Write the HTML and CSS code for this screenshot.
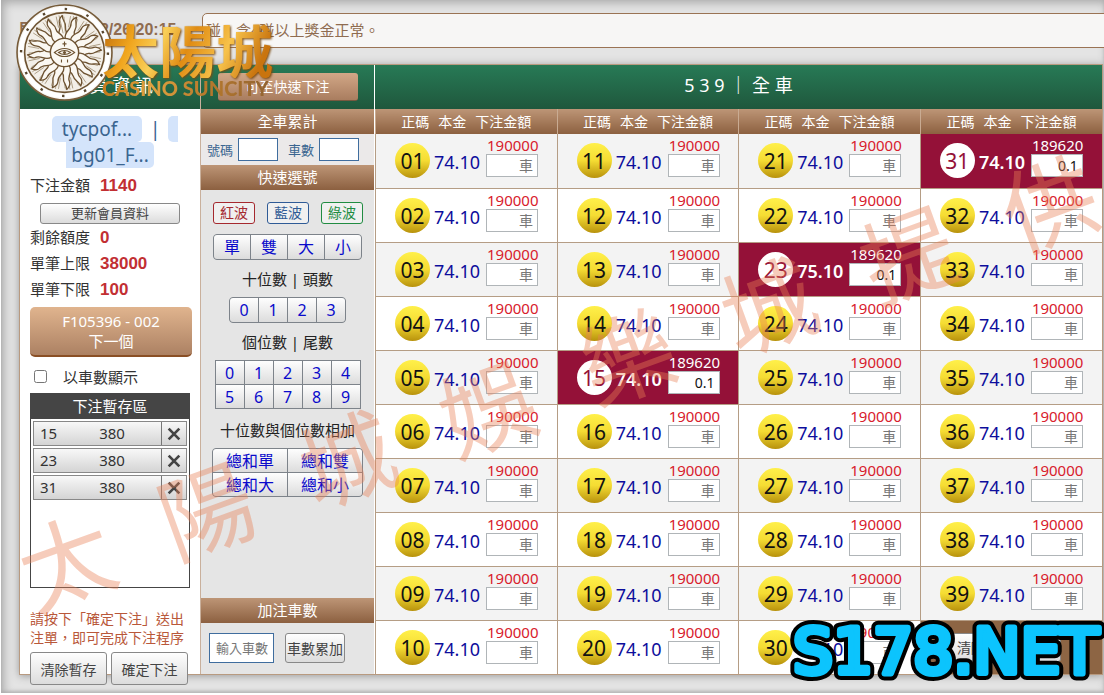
FILE: index.html
```
<!DOCTYPE html>
<html lang="zh-Hant">

<head>
    <meta charset="utf-8">
    <title>539 全車</title>
    <link rel="stylesheet" href="styles.css">
</head>

<body>
    <div class="frame">
        <div class="topbar">
            <div class="clock">即：2020/12/26 20:15</div>
            <div class="news">碰，含4碰以上獎金正常。</div>
        </div>

        <div class="panel">
            <div class="member">
                <div class="green-title">會 員 資 訊</div>
                <div class="member-body">
                    <div class="account">
                        <div class="account-line"><span class="tag">tycpof...</span><span>|</span><span class="tag-stub"></span></div>
                        <div class="account-line"><span class="tag tag-second">bg01_F...</span></div>
                    </div>
                    <div class="info">下注金額<b>1140</b></div>
                    <button class="refresh" type="button">更新會員資料</button>
                    <div class="info">剩餘額度<b>0</b></div>
                    <div class="info">單筆上限<b>38000</b></div>
                    <div class="info">單筆下限<b>100</b></div>
                    <button class="next" type="button">F105396 - 002<br>下一個</button>
                    <label class="show-cars"><input type="checkbox">以車數顯示</label>
                    <div class="temp">
                        <div class="temp-title">下注暫存區</div>
                        <ul id="temp-list"></ul>
                    </div>
                    <p class="notice">請按下「確定下注」送出<br>注單，即可完成下注程序</p>
                    <div class="actions">
                        <button type="button">清除暫存</button>
                        <button type="button">確定下注</button>
                    </div>
                </div>
            </div>

            <div class="quick">
                <div class="green-title"><button class="to-quick" type="button">可至快速下注</button></div>
                <div class="brown-title">全車累計</div>
                <div class="sum-row">
                    <label for="sum-no">號碼</label><input type="text" id="sum-no">
                    <label for="sum-car">車數</label><input type="text" id="sum-car">
                </div>
                <div class="brown-title">快速選號</div>
                <div class="waves">
                    <button class="red" type="button">紅波</button>
                    <button class="blue" type="button">藍波</button>
                    <button class="green" type="button">綠波</button>
                </div>
                <div class="keys keys-kind">
                    <button type="button">單</button><button type="button">雙</button><button type="button">大</button><button type="button">小</button>
                </div>
                <div class="quick-label">十位數 | 頭數</div>
                <div class="keys keys-head">
                    <button type="button">0</button><button type="button">1</button><button type="button">2</button><button type="button">3</button>
                </div>
                <div class="quick-label">個位數 | 尾數</div>
                <div class="keys keys-tail">
                    <button type="button">0</button><button type="button">1</button><button type="button">2</button><button type="button">3</button><button type="button">4</button>
                    <button type="button">5</button><button type="button">6</button><button type="button">7</button><button type="button">8</button><button type="button">9</button>
                </div>
                <div class="quick-label">十位數與個位數相加</div>
                <div class="keys keys-total">
                    <button type="button">總和單</button><button type="button">總和雙</button>
                    <button type="button">總和大</button><button type="button">總和小</button>
                </div>
                <div class="add-cars">
                    <div class="brown-title">加注車數</div>
                    <div class="add-row">
                        <input type="text" placeholder="輸入車數" aria-label="輸入車數">
                        <button type="button">車數累加</button>
                    </div>
                </div>
            </div>

            <div class="board">
                <div class="green-title">5 3 9 ｜ 全 車</div>
                <table>
                    <thead>
                        <tr id="board-head"></tr>
                    </thead>
                    <tbody id="board-body"></tbody>
                </table>
            </div>
        </div>
    </div>

    <div class="logo">
        <svg class="sun" viewBox="0 0 100 100">
            <defs>
                <g id="rays">
                    <path d="M45.500 37 C41 31 48 27 45 21 C44 18 46 15 48 13 C47 18 52 20 51 25 C50 30 55 31 54.500 37 Z" fill="#fbf8f2" />
                    <path d="M45.500 37 C41 31 48 27 45 21 C44 18 46 15 48 13 M48 13 C47 18 52 20 51 25 C50 30 55 31 54.500 37" fill="none" stroke="#6d5231" stroke-width="1.3" />
                    <path d="M56 32 L59 14 M58 33 L63 17 M54 25 L56 14" fill="none" stroke="#8b7655" stroke-width=".6" />
                </g>
            </defs>
            <circle cx="50" cy="50" r="47" fill="#f7f5f1" stroke="#765b39" stroke-width="1.6" />
            <circle cx="50" cy="50" r="43" fill="none" stroke="#fff" stroke-width="4" />
            <circle cx="50" cy="50" r="43" fill="none" stroke="#57452c" stroke-width="2.400" stroke-dasharray="2.400 20.100" />
            <circle cx="50" cy="50" r="39.500" fill="#f3efe8" stroke="#6d5231" stroke-width="1.6" />
            <g id="sun-rays"></g>
            <circle cx="50" cy="50" r="14" fill="#fbf8f2" stroke="#6d5231" stroke-width="1.4" />
            <path d="M40 50 Q50 42 60 50 Q50 58 40 50 Z M44 50 Q50 46 56 50 Q50 54 44 50 Z M50 39 V44 M48 41.500 H52 M47 57 V60 M53 57 V60" fill="none" stroke="#6d5231" stroke-width="1.1" />
            <circle cx="50" cy="50" r="1.5" fill="#6d5231" />
        </svg>
        <div class="logo-text">
            <div class="logo-name">太陽城</div>
            <div class="logo-sub">CASINO SUNCITY</div>
        </div>
    </div>

    <div class="watermark">
        <span>太</span><span>陽</span><span>城</span><span>娛</span><span>樂</span><span>城</span><span>提</span><span>供</span>
    </div>

    <svg class="site" viewBox="0 0 320 76">
        <text class="site-edge" x="9" y="56">S178.NET</text>
        <text class="site-face" x="9" y="56">S178.NET</text>
    </svg>

    <script>
        const picked = { 15: '74.10', 23: '75.10', 31: '74.10' };
        const head = document.getElementById('board-head');
        const body = document.getElementById('board-body');
        const tempList = document.getElementById('temp-list');

        for (let c = 0; c < 4; c++) {
            head.innerHTML += '<th><span>正碼</span><span>本金</span><span>下注金額</span></th>';
        }

        function cell(n) {
            const no = String(n).padStart(2, '0');
            const on = picked[n];
            return `<td class="${on ? 'on' : ''}"><div class="bet">
                <span class="ball">${no}</span>
                <span class="odds">${on || '74.10'}</span>
                <span class="stake"><span>${on ? 189620 : 190000}</span>
                <input type="text" placeholder="車" aria-label="${no} 車數" value="${on ? '0.1' : ''}"></span>
            </div></td>`;
        }

        for (let r = 1; r <= 10; r++) {
            let row = '';
            for (let c = 0; c < 4; c++) {
                const n = c * 10 + r;
                // 沒有 40 號，最後一格放按鈕
                row += n < 40 ? cell(n) : '<td class="submit"><div><button type="button">清除</button><button type="button">確定(+)</button></div></td>';
            }
            body.innerHTML += `<tr>${row}</tr>`;
        }

        for (const n in picked) {
            tempList.innerHTML += `<li><span>${n}</span><span class="money">380</span><button type="button" aria-label="刪除 ${n}">
                <svg viewBox="0 0 12 12"><path d="M2 2 L10 10 M10 2 L2 10" /></svg></button></li>`;
        }

        let rays = '';
        for (let i = 0; i < 16; i++) {
            rays += `<use href="#rays" transform="rotate(${i * 22.5} 50 50)" />`;
        }
        document.getElementById('sun-rays').innerHTML = rays;
    </script>
</body>

</html>
```
FILE: styles.css
```
* {
    box-sizing: border-box;
}

body {
    margin: 0;
    padding-left: 1px;
    position: relative;
    overflow: hidden;
    background-color: #fff;
    font-family: "Noto Sans", "Noto Sans CJK TC", sans-serif;
    font-size: 15px;
    color: #333;
}

button,
input {
    font-family: inherit;
    padding: 0;
    margin: 0;
}

button {
    cursor: pointer;
    color: #444;
    border: 1px solid #888;
    border-radius: 3px;
    background: linear-gradient(#fefefe, #dcdcdc);
}

.frame {
    padding: 13px 1px 18px 18px;
    background-color: #e4e4e4;
    box-shadow: inset 3px 3px 10px #aaa, inset 0 -2px 3px #bbb;
}

.topbar {
    display: flex;
    height: 35px;
    margin-right: -6px;
    margin-bottom: 16px;
    line-height: 33px;
    color: #8f6c50;
}

.clock {
    width: 183px;
    white-space: nowrap;
    overflow: hidden;
    font-family: "Liberation Sans", "Noto Sans CJK TC", sans-serif;
    font-size: 16px;
    font-weight: bold;
}

.news {
    flex: 1;
    padding-left: 3px;
    border: 1px solid #9a7354;
    border-radius: 5px;
    background-color: #f7f6f5;
}

.panel {
    display: flex;
    min-height: 611px;
    border: 1px solid #b89a80;
    box-shadow: 0 1px 8px #999;
}

.green-title {
    height: 44px;
    line-height: 40px;
    text-align: center;
    font-size: 18px;
    color: #fff;
    background: linear-gradient(#277a56, #1f573c);
}

.brown-title {
    height: 25px;
    line-height: 24px;
    text-align: center;
    color: #fff;
    background: linear-gradient(#bd9576, #8c6040);
}

/* 會員資訊 */
.member {
    width: 181px;
    background-color: #fff;
    border-right: 1px solid #c9b09c;
}

.member-body {
    padding: 7px 9px 0 10px;
}

.account {
    font-size: 19px;
    line-height: 26px;
    color: #3a6590;
    margin-bottom: 4px;
}

.account-line {
    display: flex;
    gap: 8px;
    height: 26px;
    padding-left: 22px;
}

.account-line + .account-line {
    padding-left: 36px;
}

.tag {
    width: 90px;
    text-align: center;
    border-radius: 5px;
    background-color: #d4e4fb;
}

.tag-second {
    width: 88px;
    border-radius: 0 5px 5px 0;
}

.tag-stub {
    width: 10px;
    border-radius: 5px 0 0 5px;
    background-color: #d4e4fb;
}

.info {
    height: 26px;
    line-height: 26px;
}

.info b {
    margin-left: 10px;
    font-family: "Liberation Sans", Arial, sans-serif;
    font-size: 17px;
    color: #c22f33;
}

.refresh {
    display: block;
    width: 140px;
    height: 21px;
    margin: 5px 0 0 10px;
    font-size: 13px;
    line-height: 19px;
}

.next {
    display: block;
    width: 162px;
    height: 50px;
    margin: 5px 0 10px;
    font-size: 15px;
    line-height: 20px;
    color: #fff;
    border: 0;
    border-bottom: 2px solid #8a4f25;
    border-radius: 5px;
    background: linear-gradient(#e0b48e, #ac8163);
}

.show-cars {
    display: flex;
    align-items: center;
    gap: 16px;
    height: 18px;
    padding-left: 4px;
}

.show-cars input {
    width: 13px;
    height: 13px;
    margin: 0;
}

.temp {
    width: 160px;
    height: 195px;
    margin-top: 8px;
    border: 1px solid #454545;
}

.temp-title {
    height: 25px;
    line-height: 24px;
    text-align: center;
    color: #fff;
    background-color: #454545;
}

.temp ul {
    display: flex;
    flex-direction: column;
    gap: 2px;
    margin: 0;
    padding: 2px;
    list-style: none;
}

.temp li {
    display: flex;
    height: 25px;
    line-height: 23px;
    padding-left: 6px;
    border: 1px solid #888;
    background: linear-gradient(#f8f8f8, #d4d4d4);
}

.temp .money {
    flex: 1;
    padding-left: 42px;
}

.temp li button {
    width: 25px;
    border: 0;
    border-left: 1px solid #777;
    border-radius: 0;
    background: none;
}

.temp svg {
    display: block;
    width: 16px;
    height: 16px;
    margin: 0 auto;
}

.temp path {
    stroke: #444;
    stroke-width: 2;
}

.notice {
    margin: 21px 0 5px;
    font-size: 14px;
    line-height: 19px;
    color: #b9583a;
    white-space: nowrap;
}

.actions {
    display: flex;
    gap: 4px;
    margin-bottom: -12px;
}

.actions button {
    width: 77px;
    height: 33px;
    font-size: 14px;
}

/* 快速選號 */
.quick {
    display: flex;
    flex-direction: column;
    width: 174px;
    background-color: #e5e5e5;
    border-right: 1px solid #fff;
}

.to-quick {
    width: 140px;
    height: 28px;
    font-size: 14px;
    color: #fff;
    border: 0;
    border-bottom: 1px solid #79583f;
    background: linear-gradient(#d2a787, #a97d5f);
}

.sum-row {
    display: flex;
    align-items: center;
    gap: 5px;
    height: 31px;
    padding-left: 6px;
    font-size: 13px;
    color: #3a6590;
    background-color: #ebe9e9;
}

.sum-row input {
    width: 40px;
    height: 23px;
    border: 1px solid #3f6d9e;
}

.sum-row label + input + label {
    margin-left: 5px;
}

.waves {
    display: flex;
    gap: 12px;
    margin: 12px 0 10px 12px;
}

.waves button {
    width: 42px;
    height: 22px;
    font-size: 14px;
    line-height: 18px;
    background: #f0f0f0;
}

.waves .red {
    color: #a5292f;
    border-color: #a5292f;
}

.waves .blue {
    color: #2f5b96;
    border-color: #2f5b96;
}

.waves .green {
    color: #218c42;
    border-color: #218c42;
}

.keys {
    display: grid;
    gap: 1px;
    align-self: center;
    overflow: hidden;
    border: 1px solid #7d838a;
    border-radius: 4px;
    background-color: #7d838a;
}

.keys button {
    height: 24px;
    font-size: 16px;
    line-height: 22px;
    color: #0a0acb;
    border: 0;
    border-radius: 0;
}

.keys-kind {
    grid-template-columns: repeat(4, 36px);
}

.keys-head {
    grid-template-columns: repeat(4, 28px);
}

.keys-tail {
    grid-template-columns: repeat(5, 28px);
    border-radius: 0;
}

.keys-total {
    grid-template-columns: repeat(2, 74px);
}

.keys-tail button,
.keys-total button {
    height: 23px;
}

.quick-label {
    height: 37px;
    line-height: 38px;
    text-align: center;
    font-size: 15px;
    color: #222;
}

.keys-tail + .quick-label {
    height: 39px;
    line-height: 43px;
}

.add-cars {
    margin-top: auto;
}

.add-row {
    display: flex;
    gap: 11px;
    height: 51px;
    padding: 10px 8px;
}

.add-row input {
    width: 65px;
    height: 30px;
    padding-left: 6px;
    font-size: 13px;
    border: 1px solid #3f6d9e;
}

.add-row button {
    width: 60px;
    height: 30px;
    font-size: 14px;
    white-space: nowrap;
}

/* 號碼表 */
.board {
    flex: 1;
    background-color: #fff;
}

.board table {
    width: 100%;
    table-layout: fixed;
    border-collapse: collapse;
}

.board th {
    height: 25px;
    padding: 0;
    font-size: 14px;
    font-weight: normal;
    line-height: 24px;
    color: #fff;
    border-left: 1px solid #c9ab92;
    background: linear-gradient(#bd9576, #8c6040);
}

.board th span + span {
    margin-left: 9px;
}

.board td {
    height: 54px;
    padding: 0;
    border-left: 1px solid #b59d85;
    border-bottom: 1px solid #b59d85;
}

.board tr:last-child td {
    border-bottom: 0;
}

.board tbody tr:nth-child(odd) {
    background-color: #f3f3f3;
}

.bet {
    display: flex;
    align-items: center;
    height: 53px;
    padding-left: 19px;
}

.ball {
    width: 35px;
    height: 35px;
    line-height: 36px;
    text-align: center;
    font-size: 21px;
    color: #111;
    border-radius: 50%;
    background: linear-gradient(#fff04a, #f5dc33 50%, #b8920c);
}

.odds {
    width: 52px;
    padding: 3px 0 0 4px;
    font-size: 18px;
    line-height: 24px;
    color: #0d0d9c;
}

.stake {
    display: flex;
    flex-direction: column;
    width: 54px;
    padding-left: 4px;
    margin-bottom: 7px;
    font-size: 15px;
    line-height: 16px;
    color: #d8202c;
}

.stake span {
    padding-left: 1px;
}

.stake input {
    width: 52px;
    height: 23px;
    margin-top: 1px;
    padding-right: 4px;
    text-align: right;
    font-size: 14px;
    color: #111;
    border: 1px solid #b0b5b8;
    background-color: #fff;
}

::placeholder {
    color: #777;
    opacity: 1;
}

.board td.on {
    background-color: #941138;
}

.on .ball {
    color: #941138;
    background: #fff;
}

.on .odds {
    font-weight: 600;
    color: #fff;
}

.on .stake {
    color: #fff;
}

.board td.submit {
    background-color: #8d6544;
}

.submit div {
    display: flex;
    gap: 8px;
    padding-left: 28px;
}

.submit button {
    height: 29px;
    padding: 0 7px;
    font-size: 14px;
}

/* 浮在頁面上的標誌與浮水印 */
.logo {
    position: absolute;
    top: 2px;
    left: 14px;
    display: flex;
}

.sun {
    width: 101px;
    height: 101px;
}

.logo-text {
    margin-left: -13px;
    padding-top: 16px;
}

.logo-name {
    font-family: "Noto Sans CJK TC", sans-serif;
    font-weight: 700;
    font-size: 57px;
    line-height: 60px;
    color: transparent;
    background: linear-gradient(115deg, #b8660c, #f0a51e 20%, #f9cf58 35%, #e08c14 50%, #f7c24a 70%, #c9740e 90%);
    -webkit-background-clip: text;
    background-clip: text;
    filter: drop-shadow(1px 1px 1px #7a4a10);
}

.logo-sub {
    font-family: Lato, sans-serif;
    font-weight: 900;
    font-size: 20px;
    line-height: 20px;
    white-space: nowrap;
    color: transparent;
    background: linear-gradient(90deg, #c57a1c, #e0a240 30%, #b97a2c 60%, #8f6232);
    -webkit-background-clip: text;
    background-clip: text;
}

.watermark {
    position: absolute;
    top: 331px;
    left: -14px;
    display: flex;
    justify-content: space-between;
    width: 1140px;
    font-family: "Noto Sans CJK TC", sans-serif;
    font-size: 94px;
    line-height: 94px;
    color: rgba(233, 127, 86, 0.4);
    transform: rotate(-20deg);
    pointer-events: none;
}

.site {
    position: absolute;
    right: 0;
    bottom: 0;
    width: 320px;
    height: 76px;
    font-family: "DejaVu Sans", sans-serif;
    font-size: 63px;
}

.site-edge,
.site-face {
    fill: #0cc4fd;
    stroke: #0cc4fd;
    stroke-width: 6;
    stroke-linejoin: round;
}

.site-edge {
    stroke: #000;
    stroke-width: 14;
}
```
